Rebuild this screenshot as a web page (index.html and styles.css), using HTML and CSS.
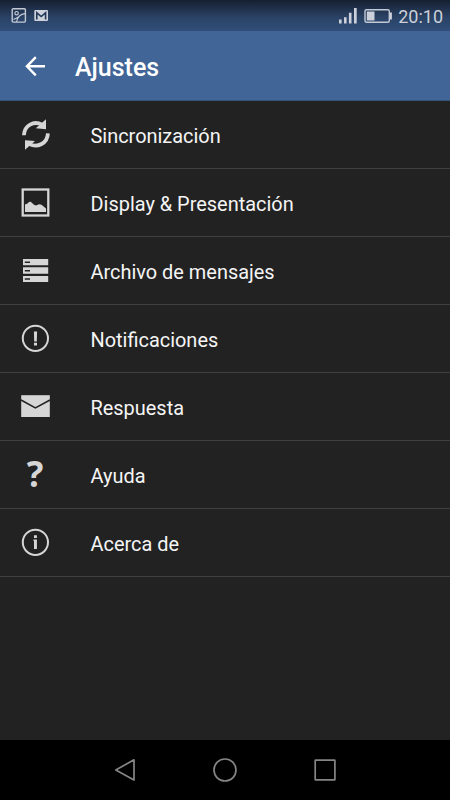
FILE: index.html
```html
<!DOCTYPE html>
<html lang="es">
<head>
<meta charset="utf-8">
<title>Ajustes</title>
<link rel="stylesheet" href="styles.css">
</head>
<body>
<div class="status">
  <svg class="notices" width="40" height="18" viewBox="0 0 40 18">
    <rect x="1.200" y="1.700" width="13.200" height="13.400" rx="1" class="line"/>
    <circle cx="5.600" cy="6.200" r="1.700" class="line thin"/>
    <path d="M2.500 12.500C4.500 11.300 6 11.300 7.300 9.900M5.500 15C6.500 10 9.500 7 14 6.700" class="line thin"/>
    <rect x="23.300" y="3" width="13.700" height="11" rx="1" class="fill"/>
    <path d="M25.800 12.500V5.800L30.200 9.500L34.600 5.800V12.500" class="mark"/>
  </svg>
  <div class="system">
    <svg width="56" height="18" viewBox="0 0 56 18">
      <path d="M1 12.500h2.600v4H1zM6 10.200h2.600v6.300H6zM10.900 5.800h2.600v10.700h-2.600zM16 1h2.700v15.500H16z" class="fill"/>
      <rect x="27" y="2.700" width="24.300" height="12.600" rx="1.500" class="line"/>
      <path d="M28.800 4.500h7.700v9h-7.700zM52 5.500h1.900v7H52z" class="fill"/>
    </svg>
    <span class="clock">20:10</span>
  </div>
</div>
<header class="bar">
  <svg width="22" height="22" viewBox="0 0 22 22"><path d="M10.800 2.200L1.900 11.300L10.800 20.400M1.900 11.300H20" class="back"/></svg>
  <h1>Ajustes</h1>
</header>
<ul class="list">
  <li>
    <svg class="icon" viewBox="0 0 32 32">
      <path d="M3.900 16.300C4.300 6 14 1.500 22 5.600M27.900 14.300C27.500 24.200 17.500 29.300 9.500 25.100" class="sync"/>
      <path d="M26 .200V10.300L15.800 9.300zM5 30.800V21.200L15 22z" class="shape"/>
    </svg>
    <span class="label">Sincronización</span>
  </li>
  <li>
    <svg class="icon" viewBox="0 0 32 32">
      <rect x="2.700" y="2.500" width="25.600" height="26" class="ring frame"/>
      <path d="M5 17.500L7.500 16.500L9 15L10.700 14.700L14 17.700L16 18.500L19 17.300L21.500 17.700L26 21.500V25H5z" class="shape"/>
    </svg>
    <span class="label">Display &amp; Presentación</span>
  </li>
  <li>
    <svg class="icon" viewBox="0 0 32 32">
      <path d="M3 4h25.200v6.200H3zM3 12.300h25.200v6.400H3zM3 20.900h25.200v6.100H3z" class="shape"/>
      <path d="M4.800 7.300H10M4.800 15.700H10M4.800 24.100H10" class="cut"/>
    </svg>
    <span class="label">Archivo de mensajes</span>
  </li>
  <li>
    <svg class="icon" viewBox="0 0 32 32">
      <circle cx="15.400" cy="15.300" r="12.600" class="ring"/>
      <path d="M13.900 8.500h3.200l-.300 9.900h-2.600zM14 19.700h3v2.700h-3z" class="shape"/>
    </svg>
    <span class="label">Notificaciones</span>
  </li>
  <li>
    <svg class="icon" viewBox="0 0 32 32">
      <rect x="1.200" y="4.200" width="28.600" height="21.800" class="shape"/>
      <path d="M1 9L15.400 17L30 9" class="cut"/>
    </svg>
    <span class="label">Respuesta</span>
  </li>
  <li>
    <span class="icon query">?</span>
    <span class="label">Ayuda</span>
  </li>
  <li>
    <svg class="icon" viewBox="0 0 32 32">
      <circle cx="15.400" cy="15.300" r="12.600" class="ring"/>
      <path d="M14 8.300h2.900v2.600H14zM13.400 12.600h3.500v9.400H14v-8.200h-.6z" class="shape"/>
    </svg>
    <span class="label">Acerca de</span>
  </li>
</ul>
<nav class="keys">
  <svg viewBox="0 0 30 30"><path d="M24 4.800V25L5.800 15z"/></svg>
  <svg viewBox="0 0 30 30"><circle cx="15" cy="15" r="11"/></svg>
  <svg viewBox="0 0 30 30"><rect x="5.200" y="5.200" width="19.700" height="19.700" rx=".5"/></svg>
</nav>
</body>
</html>
```
FILE: styles.css
```css
* { box-sizing: border-box; }
body {
  margin: 0;
  width: 450px;
  height: 800px;
  display: flex;
  flex-direction: column;
  overflow: hidden;
  background: #222;
  color: #f5f5f5;
  font-family: Roboto, "Liberation Sans", sans-serif;
}
svg { display: block; flex: none; }
.status {
  height: 31px;
  display: flex;
  justify-content: space-between;
  padding: 7px 7px 0 11px;
  background: linear-gradient(#151f30, #2a4265 55%, #314e79);
}
.system { display: flex; gap: 4px; }
.clock { font-size: 18px; line-height: 19px; color: #cbd0da; }
.line { fill: none; stroke: #c3c9d5; stroke-width: 1.4; }
.thin { stroke-width: 1.2; }
.fill { fill: #cbd0da; }
.mark { fill: none; stroke: #24395a; stroke-width: 1.6; }
.bar {
  height: 70px;
  display: flex;
  align-items: center;
  gap: 28px;
  padding-left: 25px;
  background: #406596;
  border-bottom: 1px solid #35527a;
}
.back { fill: none; stroke: #fff; stroke-width: 2.4; }
h1 { margin: 4px 0 0; font-size: 25px; line-height: 30px; font-weight: 500; color: #fff; }
.list { flex: 1; margin: 0; padding: 0; list-style: none; }
.list li {
  height: 68px;
  display: flex;
  align-items: center;
  gap: 38.500px;
  padding: 0 0 0 20px;
  border-bottom: 1px solid #404040;
  font-size: 19.930px;
  line-height: 25px;
}
.label { margin-top: 3px; }
.icon { width: 32px; height: 32px; margin-top: 1px; flex: none; }
.shape { fill: #d6d6d6; }
.ring { fill: none; stroke: #d6d6d6; stroke-width: 2; }
.frame { stroke-width: 2.3; }
.sync { fill: none; stroke: #d6d6d6; stroke-width: 3.8; }
.cut { fill: none; stroke: #222; stroke-width: 1.5; }
.query {
  height: 50px;
  margin: -2px 1px 0 -1px;
  font: 700 35px/50px "Open Sans", sans-serif;
  color: #d6d6d6;
  text-align: center;
}
.keys {
  height: 60px;
  display: flex;
  justify-content: center;
  align-items: center;
  gap: 70px;
  background: #000;
}
.keys svg { width: 30px; height: 30px; fill: none; stroke: #858585; stroke-width: 1.7; stroke-linejoin: round; }
```
